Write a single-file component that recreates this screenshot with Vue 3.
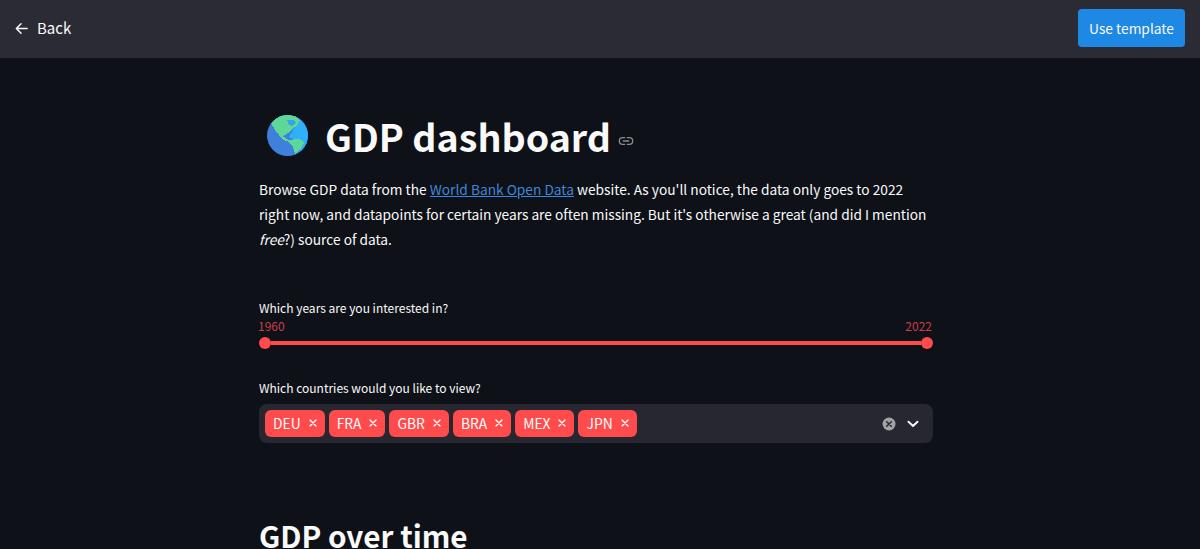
<script setup>
const countries = ['DEU', 'FRA', 'GBR', 'BRA', 'MEX', 'JPN']
</script>

<template>
  <div class="page">
    <header class="topbar">
      <a class="back">
        <svg width="15" height="15" viewBox="0 0 16 16" fill="none" stroke="#fafafa" stroke-width="1.6" stroke-linecap="round" stroke-linejoin="round">
          <path d="M14 8H2.5M7.5 3L2.5 8l5 5" />
        </svg>
        <span>Back</span>
      </a>
      <button class="use">Use template</button>
    </header>

    <main class="scroller">
      <div class="content">
        <div class="title">
          <svg class="globe" width="41" height="41" viewBox="0 0 41 41" shape-rendering="crispEdges">
            <defs>
              <clipPath id="globeclip"><circle cx="20.5" cy="20.5" r="20.5" /></clipPath>
            </defs>
            <g clip-path="url(#globeclip)">
              <rect width="41" height="41" fill="#3f80dc" />
              <path d="M12 0H41V41H30L36 28L22 22L28 12L10 8Z" fill="#2fb0fb" />
              <path d="M4 8L10 3L16 0H27L33 5L30 11L25 14L21 18L16 21.5L22 25L30 24L35 25L37 28L32 36L28 39L26 32L22 27L15 24L12 20L8 15Z" fill="#5ed898" />
              <path d="M20 5L26 4.5L29 7L26 11L22 10Z" fill="#35a4ec" />
            </g>
          </svg>
          <h1>GDP dashboard</h1>
          <svg class="anchor" width="16" height="16" viewBox="0 0 24 24" fill="none" stroke="#8b8c91" stroke-width="2" stroke-linecap="round">
            <path d="M10 7H7a5 5 0 0 0 0 10h3M14 7h3a5 5 0 0 1 0 10h-3M8 12h8" />
          </svg>
        </div>

        <p class="intro">
          Browse GDP data from the <a href="#">World Bank Open Data</a> website. As you'll notice, the data only goes to 2022
          right now, and datapoints for certain years are often missing. But it's otherwise a great (and did I mention
          <em>free</em>?) source of data.
        </p>

        <label class="lbl first">Which years are you interested in?</label>
        <div class="ticks"><span>1960</span><span>2022</span></div>
        <div class="slider">
          <i class="thumb"></i>
          <i class="track"></i>
          <i class="thumb"></i>
        </div>

        <label class="lbl second">Which countries would you like to view?</label>
        <div class="select">
          <div class="chips">
            <span v-for="c in countries" :key="c" class="chip">
              {{ c }}
              <svg width="8" height="8" viewBox="0 0 8 8" stroke="#fff" stroke-width="1.4" stroke-linecap="round"><path d="M1 1l6 6M7 1L1 7" /></svg>
            </span>
          </div>
          <svg width="14" height="14" viewBox="0 0 14 14" class="clear">
            <circle cx="7" cy="7" r="6.5" fill="#a3a3a6" />
            <path d="M4.7 4.7l4.6 4.6M9.3 4.7L4.7 9.3" stroke="#262730" stroke-width="1.5" stroke-linecap="round" />
          </svg>
          <svg width="12" height="8" viewBox="0 0 12 8" fill="none" stroke="#fafafa" stroke-width="2" stroke-linecap="round" stroke-linejoin="round" class="chev">
            <path d="M1.5 1.8L6 6l4.5-4.2" />
          </svg>
        </div>

        <h2>GDP over time</h2>
      </div>
    </main>
  </div>
</template>

<style>
html, body { margin: 0; background: #0e1117; }
</style>

<style scoped>
.page {
  height: 549px;
  overflow: hidden;
  background: #0e1117;
  color: #fafafa;
  font-family: "Noto Sans CJK SC", "Noto Sans", sans-serif;
}
.topbar {
  height: 58px;
  box-sizing: border-box;
  background: #2a2b35;
  display: flex;
  align-items: center;
  justify-content: space-between;
  padding: 0 15px 2px 14px;
}
.back {
  display: flex;
  align-items: center;
  gap: 8px;
  font-size: 15px;
}
.back span { padding-bottom: 2px; }
.use {
  width: 107px;
  height: 38px;
  padding: 0 0 1px;
  border: none;
  border-radius: 4px;
  background: #1e88e5;
  color: #fafafa;
  font: inherit;
  font-size: 13.75px;
}
.scroller { padding-right: 8px; }
.content {
  width: 674px;
  margin: 0 auto;
}
.title {
  display: flex;
  align-items: center;
  margin-top: 50px;
  height: 54px;
}
.globe { margin-left: 8px; margin-right: 17px; flex: none; }
h1 {
  margin: 0;
  padding-top: 1px;
  font-size: 37.6px;
  font-weight: 700;
  line-height: 54px;
}
.anchor { margin: 12px 0 0 7px; }
.intro {
  margin: 15px 0 0;
  font-size: 13.72px;
  line-height: 25px;
}
.intro a { color: #3f86d8; text-decoration: underline; }
.lbl { display: block; font-size: 12px; line-height: 20px; }
.first { margin-top: 46px; }
.second { margin-top: 29px; }
.ticks {
  display: flex;
  justify-content: space-between;
  margin: 0 1px 0 -1px;
  font-size: 12px;
  line-height: 16px;
  color: #cc3f47;
}
.slider {
  display: flex;
  align-items: center;
  height: 12px;
  margin-top: 3px;
}
.thumb {
  width: 12px;
  height: 12px;
  border-radius: 50%;
  background: #ff4b4b;
  flex: none;
}
.track {
  flex: 1;
  height: 4px;
  background: #ff4b4b;
}
.select {
  display: flex;
  align-items: center;
  height: 39px;
  margin-top: 6px;
  padding: 0 14px 0 6px;
  border-radius: 8px;
  background: #262730;
}
.chips { display: flex; gap: 4px; flex: 1; }
.chip {
  display: flex;
  align-items: center;
  gap: 8px;
  height: 27px;
  box-sizing: border-box;
  padding: 0 8px 1px;
  border-radius: 6px;
  background: #ff4b4b;
  color: #fff;
  font-size: 13.85px;
}
.clear { margin-right: 11px; }
h2 {
  margin: 73px 0 0;
  font-size: 29.7px;
  font-weight: 700;
  line-height: 40px;
}
</style>
